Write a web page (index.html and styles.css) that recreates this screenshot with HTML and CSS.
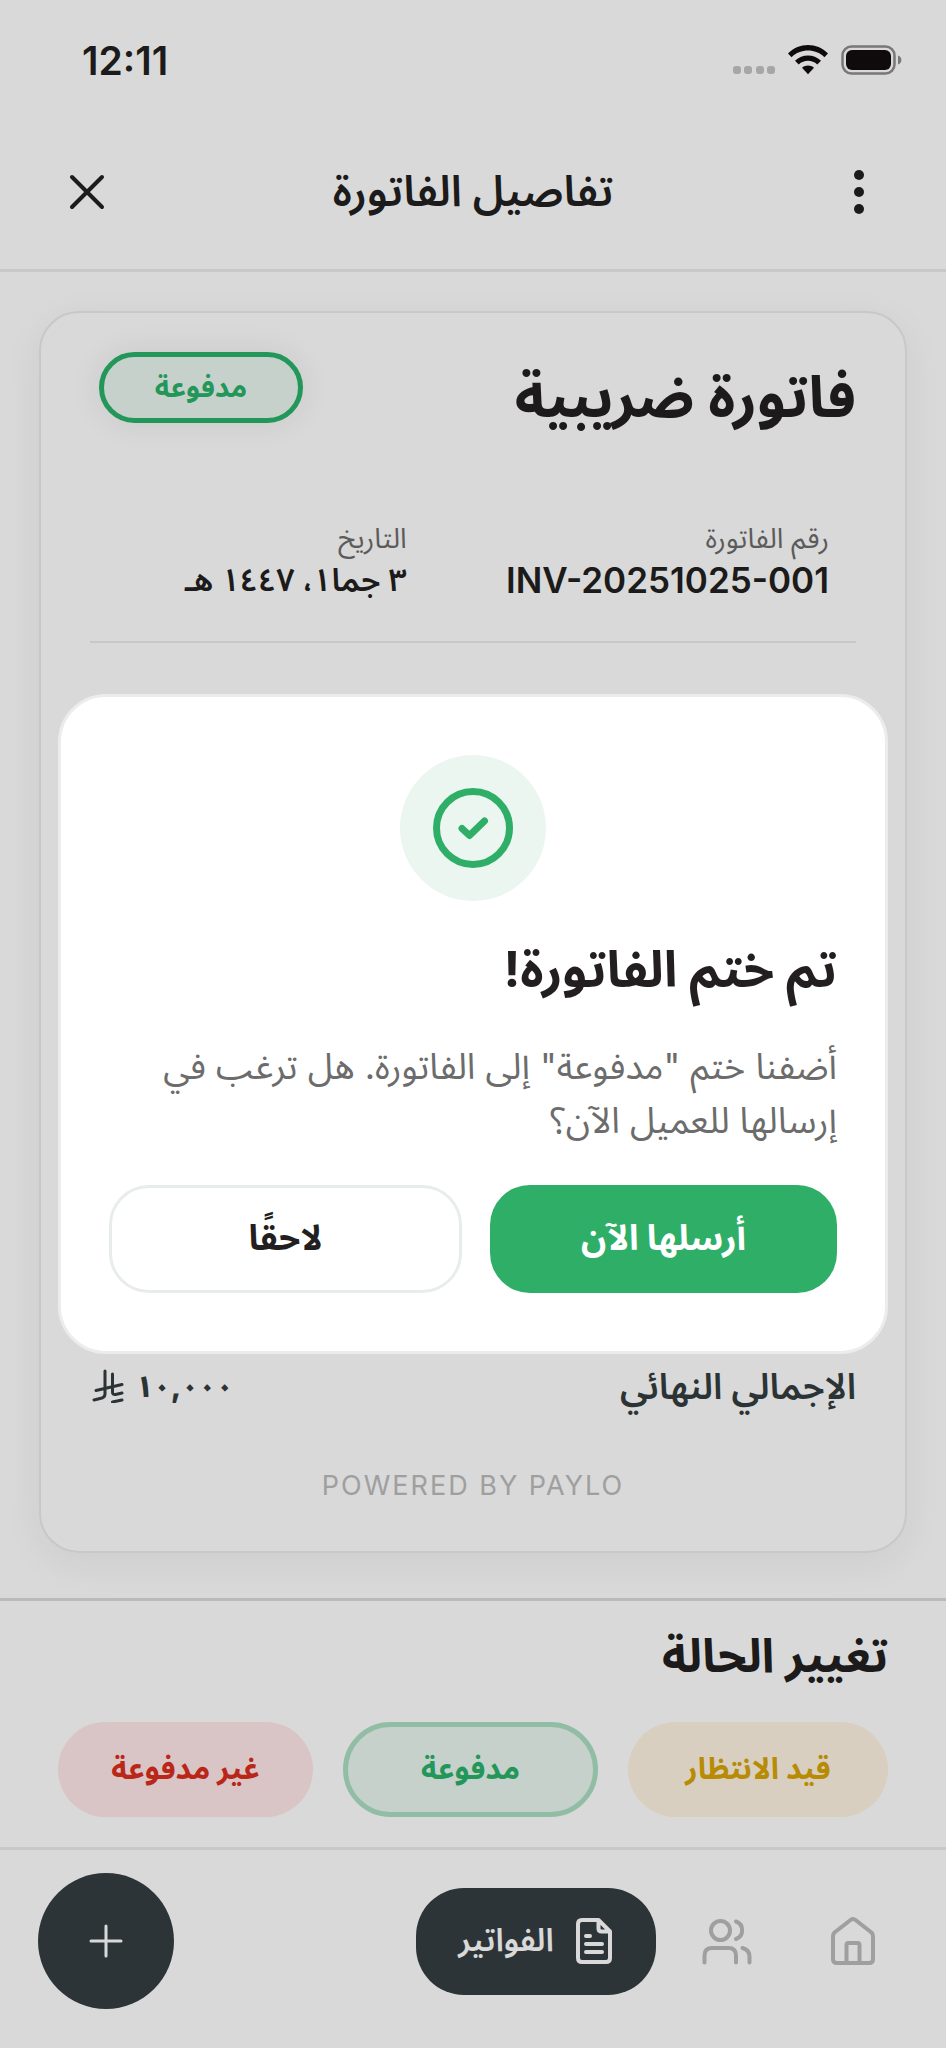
FILE: index.html
```html
<!DOCTYPE html>
<html lang="ar" dir="rtl">
<head>
<meta charset="utf-8">
<meta name="viewport" content="width=device-width, initial-scale=1">
<title>تفاصيل الفاتورة</title>
<link rel="stylesheet" href="styles.css">
</head>
<body>
<div class="app">
  <div class="status-bar" dir="ltr">
    <span class="clock">12:11</span>
    <div class="status-icons">
      <svg width="42" height="8" viewBox="0 0 42 8" fill="#c4c4c4"><rect width="8" height="8" rx="3"/><rect x="11" width="8" height="8" rx="3"/><rect x="23" width="8" height="8" rx="3"/><rect x="34" width="8" height="8" rx="3"/></svg>
      <svg width="40" height="30" viewBox="0 0 40 30" fill="#120e0f"><path d="M0 8.500C11-2.800 29-2.800 40 8.500l-3.600 3.700C27.500 3.400 12.500 3.400 3.600 12.200z"/><path d="M7 15.700c7.300-7.100 18.700-7.100 26 0l-3.700 3.700c-5.200-5-13.400-5-18.600 0z"/><path d="M14 22.800c3.300-3.200 8.700-3.200 12 0l-6 6.400z"/></svg>
      <svg width="62" height="30" viewBox="0 0 62 30"><rect x="1.500" y="1.500" width="52" height="27" rx="9" fill="none" stroke="#8d8d8d" stroke-width="2.500"/><rect x="5" y="5" width="45" height="20" rx="6" fill="#120e0f"/><path d="M57 10.500c4.500 1.500 4.500 7.500 0 9z" fill="#8d8d8d"/></svg>
    </div>
  </div>
  <header class="top-bar">
    <button class="icon-button" aria-label="خيارات"><svg width="44" height="44" viewBox="0 0 44 44" fill="#231f20"><circle cx="22" cy="5" r="5"/><circle cx="22" cy="22" r="5"/><circle cx="22" cy="39" r="5"/></svg></button>
    <h1 class="page-title">تفاصيل الفاتورة</h1>
    <button class="icon-button" aria-label="إغلاق"><svg width="44" height="44" viewBox="0 0 44 44" fill="none" stroke="#231f20" stroke-width="4" stroke-linecap="round"><path d="M7 7l30 30M37 7L7 37"/></svg></button>
  </header>

  <main class="content">
    <article class="invoice">
      <div class="invoice-head">
        <h2 class="invoice-title">فاتورة ضريبية</h2>
        <span class="badge">مدفوعة</span>
      </div>
      <dl class="meta">
        <div class="meta-item"><dt>رقم الفاتورة</dt><dd dir="ltr">INV-20251025-001</dd></div>
        <div class="meta-item"><dt>التاريخ</dt><dd class="meta-date">٣ جما١، ١٤٤٧ هـ</dd></div>
      </dl>
      <div class="total">
        <span>الإجمالي النهائي</span>
        <span class="amount">١٠,٠٠٠
          <svg width="32" height="34" viewBox="0 0 32 34" fill="none" stroke="#343d3f" stroke-width="3" stroke-linecap="round" stroke-linejoin="round"><path d="M13 2v23q0 3-3 4L2 31M20.500 5v18q0 3 3 2.500l6.500-1.500M4 21.500L30 15.500M20.500 33L30 31"/></svg>
        </span>
      </div>
      <p class="powered" dir="ltr">POWERED BY PAYLO</p>
    </article>
  </main>

  <section class="status-panel">
    <h2 class="panel-title">تغيير الحالة</h2>
    <div class="chips">
      <button class="chip chip-pending">قيد الانتظار</button>
      <button class="chip chip-paid">مدفوعة</button>
      <button class="chip chip-unpaid">غير مدفوعة</button>
    </div>
  </section>

  <nav class="bottom-nav">
    <a class="nav-link" href="#" aria-label="الرئيسية"><svg width="48" height="50" viewBox="0 0 48 50" fill="none" stroke="#bbb" stroke-width="4" stroke-linecap="round" stroke-linejoin="round"><path d="M4 20q0-2 1.500-3.500L21.500 4q2.500-2 5 0l16 12.500Q44 18 44 20v23q0 4-4 4H8q-4 0-4-4z"/><path d="M17.500 47V29q0-2 2-2h9q2 0 2 2v18"/></svg></a>
    <a class="nav-link" href="#" aria-label="العملاء"><svg width="52" height="50" viewBox="0 0 52 50" fill="none" stroke="#bbb" stroke-width="4" stroke-linecap="round"><circle cx="19.500" cy="14.500" r="9.500"/><path d="M3.500 46.500v-7q0-7.500 7.500-7.500h16.500q7.500 0 7.500 7.500v7M35 5.500a9.300 9.300 0 0 1 0 17.500M41.500 32q7 2 7 8.500v6"/></svg></a>
    <a class="nav-link nav-active" href="#"><svg width="40" height="48" viewBox="0 0 40 48" fill="none" stroke="#fff" stroke-width="4" stroke-linecap="round" stroke-linejoin="round"><path d="M24.500 3H8Q4 3 4 7v34q0 4 4 4h24q4 0 4-4V14.500zM24.500 3v8.500q0 3 3 3H36M12 19h4M12 27h16M12 35h16"/></svg><span>الفواتير</span></a>
    <button class="fab" aria-label="إضافة"><svg width="34" height="34" viewBox="0 0 34 34" fill="none" stroke="#fff" stroke-width="3" stroke-linecap="round"><path d="M17 2v30M2 17h30"/></svg></button>
  </nav>
</div>

<div class="overlay">
  <section class="dialog" role="dialog" aria-modal="true" aria-labelledby="dialog-title">
    <div class="dialog-icon"><svg width="80" height="80" viewBox="0 0 80 80" fill="none" stroke="#2fae68" stroke-width="7" stroke-linecap="round" stroke-linejoin="round"><circle cx="40" cy="40" r="36.500"/><path d="M29 40.500l7.500 7L51.500 33"/></svg></div>
    <h2 class="dialog-title" id="dialog-title">تم ختم الفاتورة!</h2>
    <p class="dialog-text">أضفنا ختم "مدفوعة" إلى الفاتورة. هل ترغب في إرسالها للعميل الآن؟</p>
    <div class="dialog-actions">
      <button class="action action-primary">أرسلها الآن</button>
      <button class="action action-secondary">لاحقًا</button>
    </div>
  </section>
</div>
</body>
</html>
```
FILE: styles.css
```css
* { box-sizing: border-box; }

body {
  margin: 0;
  background: #fff;
  color: #231f20;
  font-family: Inter, "Noto Sans Arabic", "Noto Sans", "DejaVu Sans", sans-serif;
}

h1, h2, p, dl, dd { margin: 0; }

button {
  border: 0;
  padding: 0;
  background: none;
  color: inherit;
  font: inherit;
}

svg { display: block; flex: none; }

.app {
  display: flex;
  flex-direction: column;
  min-height: 100vh;
}

.status-bar {
  display: flex;
  align-items: center;
  justify-content: space-between;
  height: 120px;
  padding: 0 43px 0 82px;
}

.clock {
  font-size: 39px;
  font-weight: 600;
}

.status-icons {
  display: flex;
  align-items: center;
  gap: 13px;
}

.status-icons svg:first-child { margin-top: 20px; }

.top-bar {
  display: flex;
  align-items: center;
  justify-content: space-between;
  height: 152px;
  padding: 0 65px 6px;
  border-bottom: 3px solid #ebebeb;
}

.page-title {
  padding-bottom: 4px;
  font-size: 43px;
  font-weight: 600;
  line-height: 56px;
}

.content {
  display: flex;
  flex: 1;
  padding: 39px 39px 45px;
  overflow: hidden;
}

.invoice {
  display: flex;
  flex: 1;
  flex-direction: column;
  padding: 39px 49px 45px;
  border: 2px solid #ebebeb;
  border-radius: 40px;
  box-shadow: 0 10px 40px rgba(0, 0, 0, 0.06);
}

.invoice-head {
  display: flex;
  align-items: flex-start;
  justify-content: space-between;
  padding-left: 9px;
}

.invoice-title {
  padding-top: 4px;
  font-size: 58px;
  font-weight: 700;
  line-height: 80px;
}

.badge {
  min-width: 204px;
  padding: 0 44px;
  border: 5px solid #2ab26a;
  border-radius: 36px;
  background: #eaf6f0;
  box-shadow: 0 0 32px rgba(0, 0, 0, 0.08);
  color: #2ab26a;
  font-size: 28px;
  font-weight: 700;
  letter-spacing: 2px;
  line-height: 61px;
  text-align: center;
}

.meta {
  display: grid;
  grid-template-columns: 4fr 3fr;
  gap: 36px;
  margin-top: 82px;
  padding: 0 27px 39px;
  border-bottom: 2px solid #ebebeb;
}

.meta-item dt {
  color: #6c6c6c;
  font-size: 28px;
  line-height: 40px;
}

.meta-item dd {
  font-size: 35px;
  font-weight: 600;
  line-height: 44px;
  text-align: right;
  white-space: nowrap;
}

.meta-item .meta-date { font-size: 32px; }

.total {
  display: flex;
  align-items: center;
  justify-content: space-between;
  margin-top: auto;
  padding-left: 2px;
  color: #343d3f;
  font-size: 36px;
  font-weight: 600;
  line-height: 48px;
}

.amount {
  display: flex;
  align-items: center;
  gap: 12px;
  font-size: 30px;
  font-weight: 800;
}

.powered {
  margin-top: 56px;
  color: #bbb;
  font-size: 27px;
  letter-spacing: 2px;
  line-height: 40px;
  text-align: center;
}

.status-panel {
  padding: 22px 58px 30px;
  border-top: 3px solid #dbdbdb;
}

.panel-title {
  font-size: 47px;
  font-weight: 700;
  line-height: 64px;
}

.chips {
  display: grid;
  grid-template-columns: 52fr 51fr 51fr;
  gap: 30px;
  margin-top: 35px;
}

.chip {
  height: 95px;
  border-radius: 48px;
  font-size: 30px;
  font-weight: 700;
}

.chip-pending { background: #fff4e3; color: #d9a406; }
.chip-paid { border: 5px solid #abdfc2; background: #eaf6f0; color: #2ab26a; }
.chip-unpaid { background: #ffe8e9; color: #db2d1d; }

.bottom-nav {
  display: flex;
  align-items: center;
  height: 201px;
  padding: 0 38px 16px;
  border-top: 3px solid #ebebeb;
}

.nav-link {
  display: flex;
  align-items: center;
  justify-content: center;
  width: 110px;
  height: 107px;
  margin-left: 16px;
}

.nav-active {
  gap: 20px;
  width: 240px;
  margin: 0;
  border-radius: 48px;
  background: #353e41;
  color: #fff;
  font-size: 32px;
  font-weight: 600;
  text-decoration: none;
}

.fab {
  display: grid;
  place-items: center;
  width: 136px;
  height: 136px;
  margin-right: auto;
  border-radius: 50%;
  background: #353e41;
}

.overlay {
  position: fixed;
  inset: 0;
  display: grid;
  align-items: center;
  padding: 0 58px;
  background: rgba(0, 0, 0, 0.15);
}

.dialog {
  padding: 58px 48px;
  border: 3px solid #ececec;
  border-radius: 48px;
  background: #fff;
}

.dialog-icon {
  display: grid;
  place-items: center;
  width: 146px;
  height: 146px;
  margin: 0 auto 34px;
  border-radius: 50%;
  background: #ebf6f1;
}

.dialog-title {
  font-size: 50px;
  font-weight: 700;
  line-height: 68px;
}

.dialog-text {
  margin-top: 36px;
  color: #6c6c6c;
  font-size: 36px;
  line-height: 54px;
}

.dialog-actions {
  display: flex;
  gap: 28px;
  margin-top: 38px;
}

.action {
  flex: 1;
  height: 108px;
  border-radius: 40px;
  font-size: 35px;
  font-weight: 700;
}

.action-primary { background: #2fae68; color: #fff; }
.action-secondary { border: 3px solid #e9ecec; }
```
